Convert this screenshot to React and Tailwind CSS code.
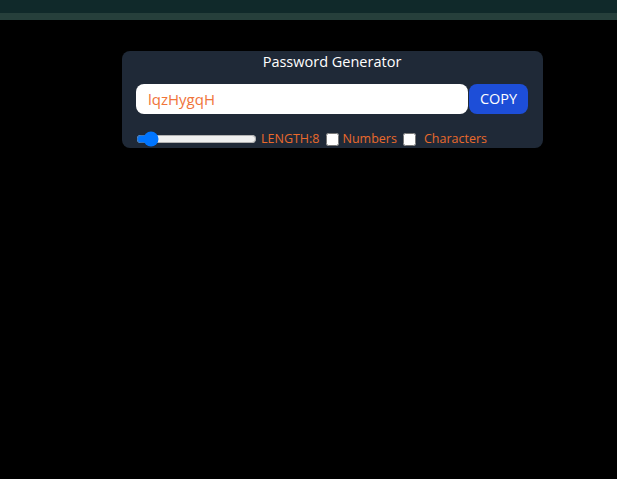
import React, { useState } from "react";

const App = () => {
  const [length, setLength] = useState(8);
  const [numberAllowed, setNumberAllowed] = useState(false);
  const [charAllowed, setCharAllowed] = useState(false);
  const [password] = useState("lqzHygqH");

  return (
    <div
      className="min-h-[479px] w-full bg-black"
      style={{ fontFamily: "'Open Sans', 'Liberation Sans', sans-serif" }}
    >
      {/* top bar */}
      <div className="h-[13px] bg-[#10292a]"></div>
      <div className="h-[7px] bg-[#263f3b]"></div>

      <div className="ml-[122px] mt-[31px] w-[421px] rounded-lg bg-[#1f2937] pl-[14px] pr-[15px] pt-[1px] text-orange-500">
        <h1 className="mb-[12px] text-center text-[14.5px] leading-[20px] text-white">
          Password Generator
        </h1>
        <div className="mb-[16px] flex gap-x-px">
          <input
            type="text"
            value={password}
            readOnly
            placeholder="Password"
            className="h-[30px] w-full rounded-lg bg-white px-3 text-[15px] text-[#f0743a] outline-none"
          />
          <button className="w-[59px] shrink-0 rounded-lg bg-[#1d4ed8] text-[14.5px] text-white">
            COPY
          </button>
        </div>
        <div className="flex h-[18px] items-center gap-x-[6px] text-[12.5px] text-[#ea6a2c]">
          <div className="flex items-center gap-x-[4px]">
            <input
              type="range"
              min={1}
              max={100}
              value={length}
              onChange={(e) => setLength(e.target.value)}
              className="w-[121px] cursor-pointer"
            />
            <label>LENGTH:{length}</label>
          </div>
          <div className="flex items-center gap-x-[4px]">
            <input
              type="checkbox"
              checked={numberAllowed}
              onChange={() => setNumberAllowed((prev) => !prev)}
            />
            <label>Numbers</label>
          </div>
          <div className="flex items-center gap-x-[8px]">
            <input
              type="checkbox"
              checked={charAllowed}
              onChange={() => setCharAllowed((prev) => !prev)}
            />
            <label>Characters</label>
          </div>
        </div>
      </div>
    </div>
  );
};

export default App;
